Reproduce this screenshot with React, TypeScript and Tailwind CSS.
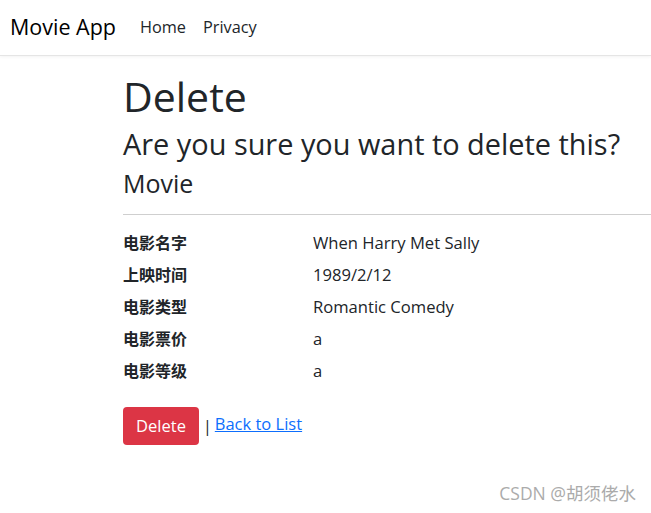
import React from "react"

const rows: [string, string][] = [
  ["电影名字", "When Harry Met Sally"],
  ["上映时间", "1989/2/12"],
  ["电影类型", "Romantic Comedy"],
  ["电影票价", "a"],
  ["电影等级", "a"],
]

export default function App() {
  return (
    <div
      className="relative min-h-[513px] bg-white text-[#212529]"
      style={{ fontFamily: '"Open Sans", "Noto Sans CJK SC", sans-serif' }}
    >
      {/* Navbar */}
      <nav className="flex h-[56px] items-center border-b border-[#e5e5e5] px-[10px] pb-[1px] shadow-[0_1px_3px_rgba(0,0,0,0.05)]">
        <span className="mr-[24px] text-[21.5px] text-black">Movie App</span>
        <a className="mr-[17px] text-[16.3px] text-[#212529]">Home</a>
        <a className="text-[16.3px] text-[#212529]">Privacy</a>
      </nav>

      {/* Main */}
      <main className="ml-[123px] pt-[14px]">
        <h1 className="text-[41px] leading-[52px]">Delete</h1>
        <h3 className="mt-[4px] text-[28.9px] leading-[36px]">Are you sure you want to delete this?</h3>
        <div>
          <h4 className="mt-[4px] text-[25px] leading-[34px]">Movie</h4>
          <hr className="mt-[14px] border-t border-[#cfcfcf]" />
          <dl className="mt-[16px]">
            {rows.map(([label, value]) => (
              <div key={label} className="flex h-[32px] text-[16.6px] leading-[24px]">
                <dt className="w-[190px] text-[16px] font-bold">{label}</dt>
                <dd>{value}</dd>
              </div>
            ))}
          </dl>
          <div className="mt-[16px] flex items-center">
            <button className="h-[38px] w-[76px] rounded-[4px] bg-[#dc3545] text-[16.5px] text-white">
              Delete
            </button>
            <span className="ml-[4px] mr-[3px] text-[16px]">|</span>
            <a className="-mt-[3px] text-[16.5px] text-[#0d6efd] underline">Back to List</a>
          </div>
        </div>
      </main>

      <div className="absolute bottom-[7px] right-[15px] text-[17.5px] text-[#ababab]">CSDN @胡须佬水</div>
    </div>
  )
}
